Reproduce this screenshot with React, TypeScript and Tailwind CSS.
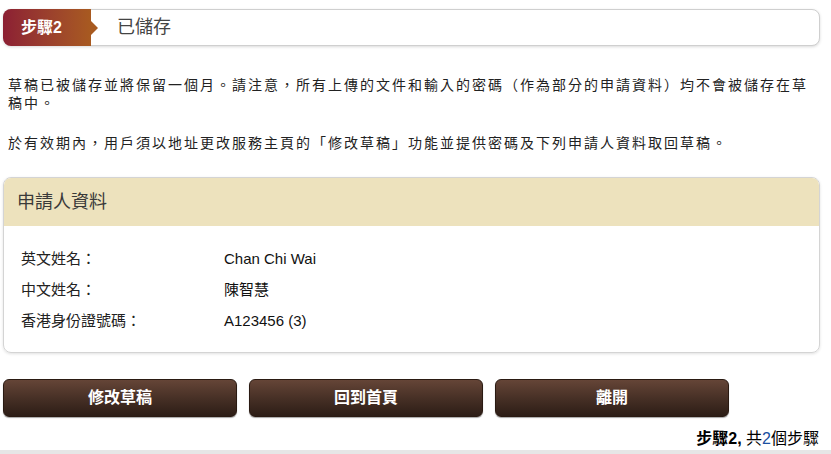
const font = { fontFamily: '"Liberation Sans", Arial, "Noto Sans CJK TC", sans-serif' };

const rows = [
  { label: '英文姓名：', value: 'Chan Chi Wai' },
  { label: '中文姓名：', value: '陳智慧' },
  { label: '香港身份證號碼：', value: 'A123456 (3)' },
];

const buttons = ['修改草稿', '回到首頁', '離開'];

const App = () => {
  return (
    <div className="h-[454px] w-[831px] overflow-hidden bg-white text-[#222]" style={font}>
      <div className="flex h-[450px] flex-col pl-[3px] pr-[11px] pt-[9px]">
        {/* step header */}
        <div className="flex h-[37px] items-center rounded-[8px] border border-[#cfcfcf] bg-white shadow-[0_1px_3px_rgba(0,0,0,0.15)]">
          <div className="relative flex h-[37px] w-[88px] -ml-px items-center rounded-l-[8px] bg-gradient-to-r from-[#8c1f33] to-[#a85a20] pl-[18px] text-[16px] font-bold text-white">
            步驟2
            <div className="absolute -right-[7px] top-1/2 h-0 w-0 -translate-y-1/2 border-y-[7px] border-l-[7px] border-y-transparent border-l-[#a85a20]" />
          </div>
          <div className="pl-[26px] text-[18px] text-[#444]">已儲存</div>
        </div>

        {/* notes */}
        <div className="mt-[30px] pl-[5px] text-[14px] leading-[18px] tracking-[2px] text-[#222]">
          <p>草稿已被儲存並將保留一個月。請注意，所有上傳的文件和輸入的密碼（作為部分的申請資料）均不會被儲存在草稿中。</p>
          <p className="mt-[22px]">於有效期內，用戶須以地址更改服務主頁的「修改草稿」功能並提供密碼及下列申請人資料取回草稿。</p>
        </div>

        {/* applicant card */}
        <div className="mt-[25px] overflow-hidden rounded-[8px] border border-[#d4d4d4] shadow-[0_1px_3px_rgba(0,0,0,0.12)]">
          <div className="flex h-[48px] items-center bg-[#ede2bd] pl-[13px] text-[18px] text-[#3a3a3a]">申請人資料</div>
          <div className="flex flex-col gap-[11px] px-[17px] pb-[21px] pt-[23px] text-[15px] leading-[20px]">
            {rows.map((r) => (
              <div key={r.label} className="flex">
                <div className="w-[203px] text-[#222]">{r.label}</div>
                <div className="text-[#111]">{r.value}</div>
              </div>
            ))}
          </div>
        </div>

        {/* actions */}
        <div className="mt-[26px] flex gap-[12px]">
          {buttons.map((b) => (
            <button
              key={b}
              className="flex h-[38px] w-[234px] items-center justify-center rounded-[6px] border border-[#2a1a12] bg-gradient-to-b from-[#654537] to-[#2c1d16] text-[16px] font-bold text-white shadow-[0_1px_1px_rgba(0,0,0,0.35)]"
            >
              {b}
            </button>
          ))}
        </div>

        <div className="mt-[12px] pr-[1px] text-right text-[16px] leading-[20px] text-black">
          <span className="font-bold">步驟2,</span> 共<span className="text-[#1a4fa0]">2</span>個步驟
        </div>
      </div>
      <div className="h-[4px] bg-[#e6e6e6]" />
    </div>
  );
};

export default App;
